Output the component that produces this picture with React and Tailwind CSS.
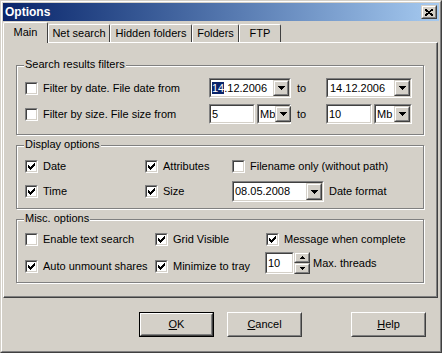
import React from "react";

const font = "font-['Liberation_Sans',Arial,sans-serif]";

function Sunken({ className = "", children }) {
  return (
    <div className={`border border-t-[#808080] border-l-[#808080] border-r-white border-b-white ${className}`}>
      <div className="flex h-full w-full items-center border border-t-[#404040] border-l-[#404040] border-r-[#d4d0c8] border-b-[#d4d0c8] bg-white">
        {children}
      </div>
    </div>
  );
}

function Raised({ className = "", children }) {
  return (
    <div className={`border border-t-[#d4d0c8] border-l-[#d4d0c8] border-r-[#404040] border-b-[#404040] ${className}`}>
      <div className="flex h-full w-full items-center justify-center border border-t-white border-l-white border-r-[#808080] border-b-[#808080] bg-[#d4d0c8]">
        {children}
      </div>
    </div>
  );
}

function ArrowDown() {
  return (
    <svg width="7" height="4" shapeRendering="crispEdges">
      <rect x="0" y="0" width="7" height="1" fill="#000" />
      <rect x="1" y="1" width="5" height="1" fill="#000" />
      <rect x="2" y="2" width="3" height="1" fill="#000" />
      <rect x="3" y="3" width="1" height="1" fill="#000" />
    </svg>
  );
}

function ArrowUpSmall() {
  return (
    <svg width="5" height="3" shapeRendering="crispEdges">
      <rect x="2" y="0" width="1" height="1" fill="#000" />
      <rect x="1" y="1" width="3" height="1" fill="#000" />
      <rect x="0" y="2" width="5" height="1" fill="#000" />
    </svg>
  );
}

function ArrowDownSmall() {
  return (
    <svg width="5" height="3" shapeRendering="crispEdges">
      <rect x="0" y="0" width="5" height="1" fill="#000" />
      <rect x="1" y="1" width="3" height="1" fill="#000" />
      <rect x="2" y="2" width="1" height="1" fill="#000" />
    </svg>
  );
}

function Combo({ className, children }) {
  return (
    <Sunken className={className}>
      <div className="flex-1 whitespace-nowrap pl-[1px] leading-[13px]">{children}</div>
      <Raised className="h-full w-[16px] shrink-0">
        <ArrowDown />
      </Raised>
    </Sunken>
  );
}

function Field({ className, children }) {
  return (
    <Sunken className={className}>
      <div className="flex-1 whitespace-nowrap pl-[1px] leading-[13px]">{children}</div>
    </Sunken>
  );
}

const checkCols = [2, 3, 4, 3, 2, 1, 0];

function Check({ checked, label, className = "" }) {
  return (
    <div className={`flex items-center gap-[5px] whitespace-nowrap ${className}`}>
      <Sunken className="h-[13px] w-[13px] shrink-0">
        {checked && (
          <svg width="9" height="9" shapeRendering="crispEdges">
            {checkCols.map((y, i) => (
              <rect key={i} x={1 + i} y={1 + y} width="1" height="3" fill="#000" />
            ))}
          </svg>
        )}
      </Sunken>
      <span className="leading-[13px]">{label}</span>
    </div>
  );
}

function Group({ title, className, children }) {
  return (
    <div className={`relative ml-[12px] w-[408px] border border-[#808080] shadow-[inset_1px_1px_0_#fff,1px_1px_0_#fff] ${className}`}>
      <span className="absolute -top-[8px] left-[7px] bg-[#d4d0c8] px-[1px] leading-[13px]">{title}</span>
      {children}
    </div>
  );
}

function Button({ children, isDefault, className = "" }) {
  return (
    <div className={`h-[25px] w-[75px] ${isDefault ? "border border-black" : ""} ${className}`}>
      <div className="h-full w-full border border-t-white border-l-white border-r-[#404040] border-b-[#404040]">
        <div className="flex h-full w-full items-center justify-center border border-t-[#d4d0c8] border-l-[#d4d0c8] border-r-[#808080] border-b-[#808080]">
          {children}
        </div>
      </div>
    </div>
  );
}

const tabs = [
  { name: "Net search", w: "w-[62px]" },
  { name: "Hidden folders", w: "w-[82px]" },
  { name: "Folders", w: "w-[47px]" },
  { name: "FTP", w: "w-[42px]" },
];

export default function App() {
  return (
    <div className={`h-[353px] w-[442px] border border-t-[#d4d0c8] border-l-[#d4d0c8] border-r-[#404040] border-b-[#404040] bg-[#d4d0c8] text-[11px] text-black ${font}`}>
      <div className="h-full border border-t-white border-l-white border-r-[#808080] border-b-[#808080] p-[1px]">
        {/* title bar */}
        <div className="flex h-[18px] items-start justify-between bg-linear-to-r from-[#0a246a] to-[#a6caf0]">
          <span className="pl-[2px] text-[12px] leading-[18px] font-bold text-white">Options</span>
          <Raised className="mt-[2px] mr-[2px] h-[14px] w-[16px]">
            <svg width="8" height="7" shapeRendering="crispEdges">
              <path d="M0 0L8 7M8 0L0 7" stroke="#000" strokeWidth="1.8" />
            </svg>
          </Raised>
        </div>

        {/* tabs */}
        <div className="mt-[1px] flex h-[21px] items-start">
          <div className="relative z-10 flex h-[21px] w-[45px] items-start justify-center rounded-t-[2px] border-t border-l border-r border-t-white border-l-white border-r-[#404040] bg-[#d4d0c8] pt-[3px]">
            <span className="leading-[13px]">Main</span>
          </div>
          {tabs.map((t) => (
            <div
              key={t.name}
              className={`mt-[2px] flex h-[18px] items-center justify-center rounded-t-[2px] border-t border-l border-r border-t-white border-l-white border-r-[#404040] ${t.w}`}
            >
              <span className="leading-[13px]">{t.name}</span>
            </div>
          ))}
        </div>

        {/* panel */}
        <div className="-mt-[1px] h-[256px] w-[435px] border border-t-white border-l-white border-r-[#404040] border-b-[#404040]">
          <div className="h-full w-full border-r border-b border-r-[#808080] border-b-[#808080] pt-[22px]">
            <Group title="Search results filters" className="h-[70px] pt-[12px] pl-[8px]">
              <div className="grid grid-cols-[184px_82px_35px_86px] gap-y-[6px]">
                <div className="flex h-[20px] items-center">
                  <Check label="Filter by date. File date from" />
                </div>
                <Combo className="h-[20px] w-full">
                  <span className="bg-[#0a246a] text-white">14</span>.12.2006
                </Combo>
                <div className="flex h-[20px] items-center pl-[6px]">to</div>
                <Combo className="h-[20px] w-full">
                  <span className="pl-[1px]">14.12.2006</span>
                </Combo>

                <div className="flex h-[20px] items-center">
                  <Check label="Filter by size. File size from" />
                </div>
                <div className="flex h-[20px] gap-[2px]">
                  <Field className="h-[20px] w-[46px]">5</Field>
                  <Combo className="h-[20px] w-[34px]">Mb</Combo>
                </div>
                <div className="flex h-[20px] items-center pl-[6px]">to</div>
                <div className="flex h-[20px] gap-[2px]">
                  <Field className="h-[20px] w-[46px]">10</Field>
                  <Combo className="h-[20px] w-[38px]">Mb</Combo>
                </div>
              </div>
            </Group>

            <Group title="Display options" className="mt-[10px] h-[64px] pt-[10px] pl-[8px]">
              <div className="grid grid-cols-[120px_87px_1fr] gap-y-[4px]">
                <div className="flex h-[21px] items-center">
                  <Check checked label="Date" />
                </div>
                <div className="flex h-[21px] items-center">
                  <Check checked label="Attributes" />
                </div>
                <div className="flex h-[21px] items-center">
                  <Check label="Filename only (without path)" />
                </div>

                <div className="flex h-[21px] items-center">
                  <Check checked label="Time" />
                </div>
                <div className="flex h-[21px] items-center">
                  <Check checked label="Size" />
                </div>
                <div className="flex h-[21px] items-center">
                  <Combo className="h-[21px] w-[92px]">08.05.2008</Combo>
                  <span className="ml-[5px] leading-[13px]">Date format</span>
                </div>
              </div>
            </Group>

            <Group title="Misc. options" className="mt-[10px] h-[64px] pt-[9px] pl-[8px]">
              <div className="grid grid-cols-[130px_111px_1fr] gap-y-[2px]">
                <div className="flex h-[21px] items-center">
                  <Check label="Enable text search" />
                </div>
                <div className="flex h-[21px] items-center">
                  <Check checked label="Grid Visible" />
                </div>
                <div className="flex h-[21px] items-center">
                  <Check checked label="Message when complete" />
                </div>

                <div className="h-[22px] pt-[8px]">
                  <Check checked label="Auto unmount shares" />
                </div>
                <div className="h-[22px] pt-[8px]">
                  <Check checked label="Minimize to tray" />
                </div>
                <div className="-ml-[1px] flex h-[22px] items-center">
                  <Field className="h-[22px] w-[29px]">10</Field>
                  <div className="flex h-[22px] w-[16px] flex-col">
                    <Raised className="h-[11px] w-[16px]">
                      <ArrowUpSmall />
                    </Raised>
                    <Raised className="h-[11px] w-[16px]">
                      <ArrowDownSmall />
                    </Raised>
                  </div>
                  <span className="ml-[3px] leading-[13px]">Max. threads</span>
                </div>
              </div>
            </Group>
          </div>
        </div>

        {/* buttons */}
        <div className="mt-[14px] ml-[136px] flex">
          <Button isDefault>
            <span><span className="underline">O</span>K</span>
          </Button>
          <Button className="ml-[13px]">
            <span><span className="underline">C</span>ancel</span>
          </Button>
          <Button className="ml-[49px]">
            <span><span className="underline">H</span>elp</span>
          </Button>
        </div>
      </div>
    </div>
  );
}
